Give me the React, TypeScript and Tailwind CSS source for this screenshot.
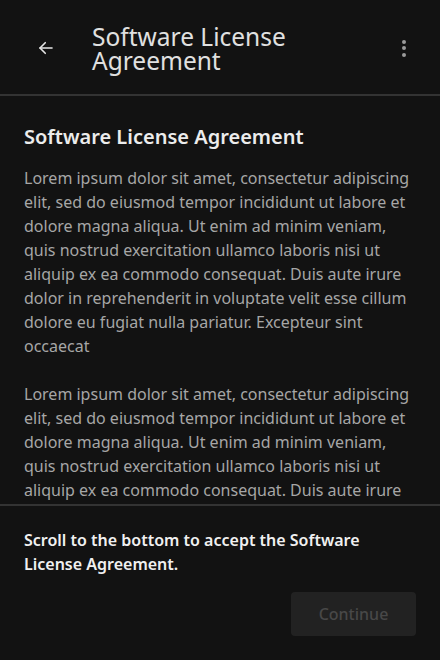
import React from 'react';

const LOREM =
    'Lorem ipsum dolor sit amet, consectetur adipiscing elit, sed do eiusmod tempor incididunt ut labore et dolore magna aliqua. Ut enim ad minim veniam, quis nostrud exercitation ullamco laboris nisi ut aliquip ex ea commodo consequat. Duis aute irure dolor in reprehenderit in voluptate velit esse cillum dolore eu fugiat nulla pariatur. Excepteur sint occaecat';

export default function App() {
    return (
        <div className="w-[440px] h-[660px] bg-[#121212] flex flex-col overflow-hidden font-['Noto_Sans',sans-serif]">
            {/* Top bar */}
            <div className="h-[96px] flex items-center shrink-0 border-b-2 border-[#333333]">
                <button className="w-[92px] h-full flex items-center justify-center pt-[2px] text-[#e6e6e6]">
                    <svg width="18" height="18" viewBox="0 0 24 24" fill="none" stroke="currentColor" strokeWidth="2.2" strokeLinecap="round" strokeLinejoin="round">
                        <path d="M20 12H4" />
                        <path d="M11 5l-7 7 7 7" />
                    </svg>
                </button>
                <h1 className="flex-1 pt-[4px] text-[24.5px] leading-[24px] text-[#e0e0e0] font-normal">
                    Software License Agreement
                </h1>
                <button className="w-[72px] h-full flex flex-col items-center justify-center gap-[2.5px] pt-[2px]">
                    <span className="w-[4px] h-[4px] rounded-full bg-[#9a9a9a]" />
                    <span className="w-[4px] h-[4px] rounded-full bg-[#9a9a9a]" />
                    <span className="w-[4px] h-[4px] rounded-full bg-[#9a9a9a]" />
                </button>
            </div>

            {/* Scrollable agreement */}
            <div className="flex-1 overflow-hidden px-6 pt-[27px]">
                <h2 className="text-[20px] leading-[28px] font-semibold text-[#ececec] mb-[15px]">
                    Software License Agreement
                </h2>
                <p className="text-[16px] leading-[24px] text-[#a6a6a6] mb-6">{LOREM}</p>
                <p className="text-[16px] leading-[24px] text-[#a6a6a6] mb-6">{LOREM}</p>
            </div>

            {/* Footer */}
            <div className="h-[156px] shrink-0 border-t-2 border-[#333333] px-6 pt-[22px] flex flex-col">
                <p className="text-[16px] leading-[24px] font-semibold text-[#f0f0f0]">
                    Scroll to the bottom to accept the Software License Agreement.
                </p>
                <div className="flex justify-end mt-[16px]">
                    <button disabled className="w-[125px] h-[44px] rounded-[4px] bg-[#222222] text-[16px] text-[#484848] font-medium">
                        Continue
                    </button>
                </div>
            </div>
        </div>
    );
}
